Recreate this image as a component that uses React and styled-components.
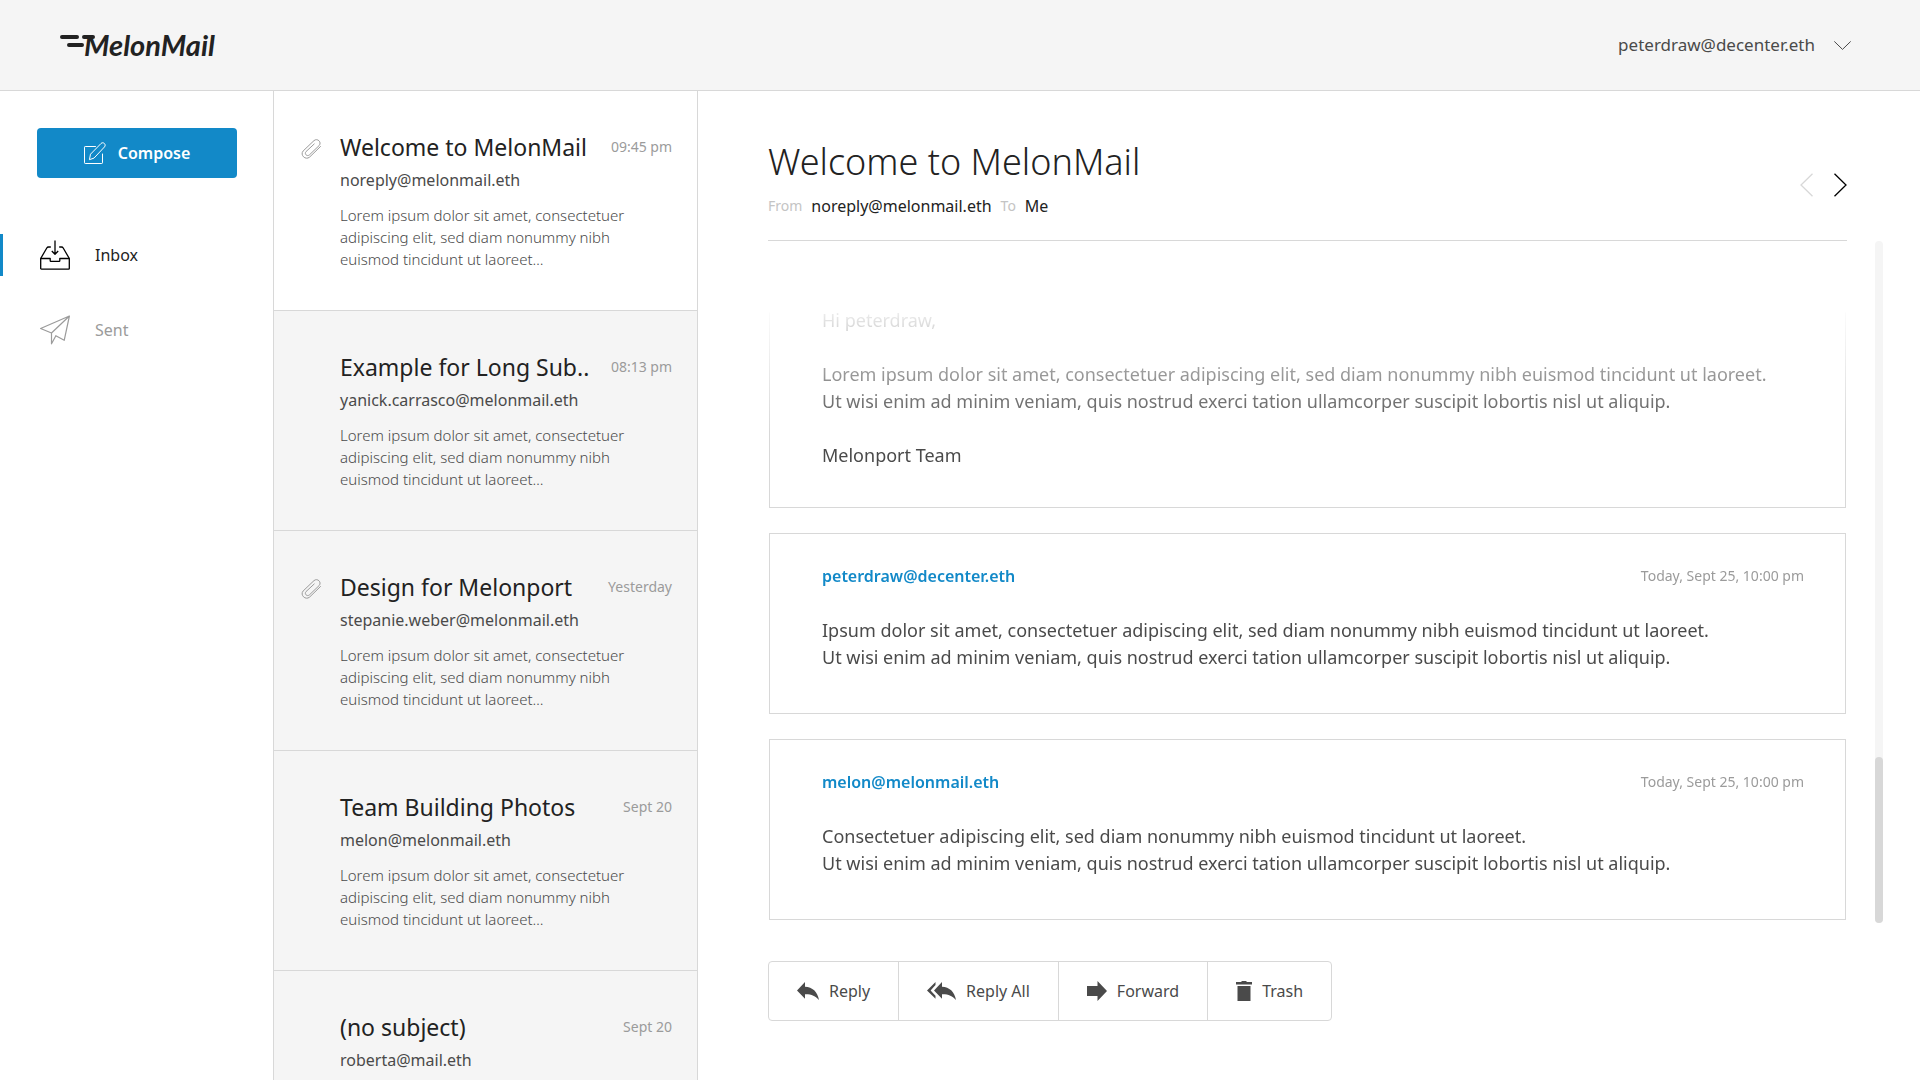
import React from 'react';
import styled, { createGlobalStyle } from 'styled-components';

const GlobalStyle = createGlobalStyle`
  *, *::before, *::after { box-sizing: border-box; }
  html, body, #root { height: 100%; margin: 0; }
  body {
    font-family: 'Noto Sans', 'Open Sans', sans-serif;
    font-size: 16px;
    line-height: 24px;
    color: #4a4a4a;
    background: #fff;
    overflow: hidden;
  }
  button { font: inherit; color: inherit; cursor: pointer; }
  a { color: inherit; text-decoration: none; }
  h1, h2, p, ul { margin: 0; padding: 0; font-weight: 400; }
  svg { display: block; flex: none; }
`;

const Page = styled.div`
  display: flex;
  flex-direction: column;
  height: 100vh;
`;

const TopBar = styled.header`
  display: flex;
  flex: none;
  align-items: center;
  justify-content: space-between;
  height: 91px;
  padding: 0 69px 0 60px;
  background: #f5f5f5;
  border-bottom: 1px solid #d8d8d8;
`;

const Logo = styled.a`
  display: flex;
  align-items: center;
  color: #222;
`;

const LogoText = styled.span`
  margin-left: -12px;
  font-family: Lato, 'Noto Sans', sans-serif;
  font-size: 29px;
  font-style: italic;
  font-weight: 700;
  line-height: 32px;
`;

const Account = styled.button`
  display: flex;
  align-items: center;
  gap: 19px;
  padding: 0;
  border: 0;
  background: none;
  font-size: 17px;
`;

const Body = styled.div`
  display: flex;
  flex: 1;
  min-height: 0;
`;

const Sidebar = styled.aside`
  flex: none;
  width: 273px;
  padding-top: 37px;
`;

const Compose = styled.button`
  display: flex;
  align-items: center;
  justify-content: center;
  gap: 12px;
  width: 200px;
  height: 50px;
  margin: 0 0 56px 37px;
  border: 0;
  border-radius: 4px;
  background: #1289c8;
  color: #fff;
  font-size: 16px;
  font-weight: 600;
`;

const Folders = styled.nav`
  display: flex;
  flex-direction: column;
  gap: 33px;
`;

const Folder = styled.a`
  display: flex;
  align-items: center;
  gap: 25px;
  height: 42px;
  padding-left: 37px;
  border-left: 3px solid ${(p) => (p.$active ? '#1289c8' : 'transparent')};
  color: ${(p) => (p.$active ? '#222' : '#9b9b9b')};
`;

const MailList = styled.ul`
  flex: none;
  width: 425px;
  overflow: hidden;
  list-style: none;
  background: #f5f5f5;
  border-left: 1px solid #d8d8d8;
  border-right: 1px solid #d8d8d8;
`;

const MailItem = styled.li`
  display: grid;
  grid-template-columns: 20px minmax(0, 1fr);
  column-gap: 19px;
  padding: 40px 25px 40px 27px;
  background: ${(p) => (p.$selected ? '#fff' : '#f5f5f5')};
  border-bottom: 1px solid #d8d8d8;
`;

const ClipSlot = styled.span`
  padding-top: 8px;
`;

const MailHead = styled.div`
  display: flex;
  align-items: center;
  justify-content: space-between;
  margin-bottom: 5px;
`;

const Subject = styled.h2`
  color: #222;
  font-size: 23px;
  line-height: 32px;
  white-space: nowrap;
`;

const Muted = styled.time`
  color: #9b9b9b;
  font-size: 14px;
  white-space: nowrap;
`;

const Snippet = styled.p`
  max-width: 310px;
  margin-top: 12px;
  font-size: 15px;
  font-weight: 300;
  line-height: 22px;
`;

const Reader = styled.main`
  display: flex;
  flex: 1;
  flex-direction: column;
  min-width: 0;
  padding: 47px 37px 59px 70px;
`;

const ReaderHead = styled.div`
  display: flex;
  align-items: center;
  justify-content: space-between;
  margin-right: 36px;
  padding-bottom: 22px;
  border-bottom: 1px solid #d8d8d8;
`;

const Title = styled.h1`
  margin-bottom: 8px;
  color: #222;
  font-size: 36px;
  font-weight: 300;
  line-height: 48px;
`;

const Route = styled.p`
  display: flex;
  gap: 9px;
  color: #222;
`;

const RouteLabel = styled.span`
  color: #c4c4c4;
  font-size: 14px;
`;

const Pager = styled.div`
  display: flex;
  gap: 21px;
  padding-top: 14px;
`;

const PagerButton = styled.button`
  padding: 0;
  border: 0;
  background: none;
  color: ${(p) => (p.disabled ? '#d8d8d8' : '#000')};
`;

const ThreadRow = styled.div`
  display: flex;
  flex: 1;
  gap: 28px;
  min-height: 0;
`;

const Thread = styled.div`
  display: flex;
  flex: 1;
  flex-direction: column;
  justify-content: flex-end;
  gap: 25px;
  min-width: 0;
  padding: 0 1px 3px;
  overflow: hidden;
  mask-image: linear-gradient(
    to bottom,
    transparent 71px,
    rgba(0, 0, 0, 0.1) 72px,
    #000 192px
  );
`;

const Card = styled.article`
  flex: none;
  padding: ${(p) => (p.$continued ? '60px 41px 38px 52px' : '30px 41px 42px 52px')};
  border: 1px solid #d8d8d8;
`;

const CardHead = styled.div`
  display: flex;
  align-items: center;
  justify-content: space-between;
  margin-bottom: 29px;
`;

const Sender = styled.a`
  color: #1289c8;
  font-weight: 600;
`;

const Copy = styled.p`
  font-size: 18px;
  line-height: 27px;

  & + & {
    margin-top: 27px;
  }
`;

const Track = styled.div`
  display: flex;
  flex: none;
  flex-direction: column;
  justify-content: flex-end;
  width: 8px;
  border-radius: 4px;
  background: #f5f5f5;
`;

const Thumb = styled.div`
  height: 166px;
  border-radius: 4px;
  background: #d8d8d8;
`;

const Actions = styled.div`
  display: flex;
  align-self: flex-start;
  height: 60px;
  margin-top: 38px;
  border: 1px solid #d8d8d8;
  border-radius: 4px;
`;

const Action = styled.button`
  display: flex;
  align-items: center;
  gap: 10px;
  padding: 0 28px;
  border: 0;
  background: none;

  & + & {
    border-left: 1px solid #d8d8d8;
  }
`;

const LogoMark = () => (
  <svg width="36" height="22" viewBox="0 0 36 22" fill="none" stroke="currentColor" strokeWidth="4" strokeLinecap="round">
    <path d="M2 3h15M24 3h9M9 11h13" />
  </svg>
);

const ChevronDown = () => (
  <svg width="17" height="9" viewBox="0 0 17 9" fill="none" stroke="currentColor">
    <path d="M.3.4l8.2 8 8.2-8" />
  </svg>
);

const ComposeIcon = () => (
  <svg width="22" height="22" viewBox="0 0 22 22" fill="none" stroke="currentColor" strokeLinejoin="round" strokeLinecap="round">
    <path d="M11.5 4.5H1.2a.7.7 0 0 0-.7.7v15.6c0 .4.3.7.7.7h16.6c.4 0 .7-.3.7-.7V12" />
    <path d="M5.5 17.3l1-5.1L17 1.5c2.200-2.200 5.600 1 3.500 3.400L10.300 15.800z" />
  </svg>
);

const InboxIcon = () => (
  <svg width="30" height="30" viewBox="0 0 30 30" fill="none" stroke="#000" strokeWidth="1.3" strokeLinejoin="round">
    <path d="M.7 18.5h9.500v2.200c0 .4.300.7.700.7h8.200c.4 0 .7-.3.700-.7v-2.200h9.500v9.900c0 .4-.3.7-.7.7H1.400c-.4 0-.7-.3-.7-.7z" />
    <path d="M.7 18.5L6.800 8c.4-.7.9-1 1.700-1h2.300M29.300 18.500L23.200 8c-.4-.7-.9-1-1.700-1h-2.300M15 .5v13.600M11.800 11l3.200 3.200 3.200-3.200" />
  </svg>
);

const SentIcon = () => (
  <svg width="30" height="30" viewBox="0 0 30 30" fill="none" stroke="currentColor" strokeWidth="1.200" strokeLinejoin="round">
    <path d="M11.5 18L.6 13.500 29.400 1l-5.200 24.300-8.800-4.800M29.400 1L11.500 18v10.800l4.400-8" />
  </svg>
);

const ClipIcon = () => (
  <svg width="20" height="20" viewBox="0 0 20 20" fill="none" stroke="#9b9b9b" strokeLinecap="round">
    <path d="M19.500 7.500L8.600 18.100C4.500 21.600-1.200 16 2.100 12L13 1.600c3.400-2.900 8 1.600 5.200 4.900L8.400 15.900c-2.400 2-5.400-1-3.400-3.300L13.200 5" />
  </svg>
);

const Prev = () => (
  <svg width="13" height="24" viewBox="0 0 13 24" fill="none" stroke="currentColor" strokeWidth="1.300">
    <path d="M12.500.7L1 12l11.500 11.300" />
  </svg>
);

const Next = () => (
  <svg width="13" height="24" viewBox="0 0 13 24" fill="none" stroke="currentColor" strokeWidth="1.300">
    <path d="M.5.7L12 12 .5 23.300" />
  </svg>
);

const ReplyIcon = () => (
  <svg width="22" height="18" viewBox="0 0 22 18" fill="currentColor">
    <path d="M8 0v4.700c7.500.4 12.500 4.800 14 13.300-3.500-4.300-8-6-14-5.800v4.600L0 8.400z" />
  </svg>
);

const ReplyAllIcon = () => (
  <svg width="29" height="18" viewBox="0 0 29 18" fill="currentColor">
    <path d="M15 0v4.700c7.500.4 12.500 4.800 14 13.300-3.500-4.300-8-6-14-5.800v4.600L7 8.400z" />
    <path d="M8.500 0v3L3.600 8.400l4.900 5.400v3L0 8.400z" />
  </svg>
);

const ForwardIcon = () => (
  <svg width="20" height="20" viewBox="0 0 20 20" fill="currentColor">
    <path d="M0 5h10.500V0L20 10l-9.500 10v-5H0z" />
  </svg>
);

const TrashIcon = () => (
  <svg width="16" height="20" viewBox="0 0 16 20" fill="currentColor">
    <path d="M0 1h5l1-1h4l1 1h5v2.500H0zM1.500 5h13v15h-13z" />
  </svg>
);

const SNIPPET = 'Lorem ipsum dolor sit amet, consectetuer adipiscing elit, sed diam nonummy nibh euismod tincidunt ut laoreet…';

const MAILS = [
  { subject: 'Welcome to MelonMail', from: 'noreply@melonmail.eth', time: '09:45 pm', clip: true, snippet: SNIPPET },
  { subject: 'Example for Long Sub..', from: 'yanick.carrasco@melonmail.eth', time: '08:13 pm', snippet: SNIPPET },
  { subject: 'Design for Melonport', from: 'stepanie.weber@melonmail.eth', time: 'Yesterday', clip: true, snippet: SNIPPET },
  { subject: 'Team Building Photos', from: 'melon@melonmail.eth', time: 'Sept 20', snippet: SNIPPET },
  { subject: '(no subject)', from: 'roberta@mail.eth', time: 'Sept 20' },
];

const WISI = 'Ut wisi enim ad minim veniam, quis nostrud exerci tation ullamcorper suscipit lobortis nisl ut aliquip.';

const REPLIES = [
  {
    from: 'peterdraw@decenter.eth',
    text: 'Ipsum dolor sit amet, consectetuer adipiscing elit, sed diam nonummy nibh euismod tincidunt ut laoreet.',
  },
  {
    from: 'melon@melonmail.eth',
    text: 'Consectetuer adipiscing elit, sed diam nonummy nibh euismod tincidunt ut laoreet.',
  },
];

const ACTIONS = [
  ['Reply', ReplyIcon],
  ['Reply All', ReplyAllIcon],
  ['Forward', ForwardIcon],
  ['Trash', TrashIcon],
];

export default function App() {
  return (
    <Page>
      <GlobalStyle />
      <TopBar>
        <Logo href="#">
          <LogoMark />
          <LogoText>MelonMail</LogoText>
        </Logo>
        <Account type="button">
          peterdraw@decenter.eth
          <ChevronDown />
        </Account>
      </TopBar>
      <Body>
        <Sidebar>
          <Compose type="button">
            <ComposeIcon />
            Compose
          </Compose>
          <Folders>
            <Folder href="#inbox" $active>
              <InboxIcon />
              Inbox
            </Folder>
            <Folder href="#sent">
              <SentIcon />
              Sent
            </Folder>
          </Folders>
        </Sidebar>
        <MailList>
          {MAILS.map((mail, i) => (
            <MailItem key={mail.from} $selected={i === 0}>
              <ClipSlot>{mail.clip && <ClipIcon />}</ClipSlot>
              <div>
                <MailHead>
                  <Subject>{mail.subject}</Subject>
                  <Muted>{mail.time}</Muted>
                </MailHead>
                <p>{mail.from}</p>
                {mail.snippet && <Snippet>{mail.snippet}</Snippet>}
              </div>
            </MailItem>
          ))}
        </MailList>
        <Reader>
          <ReaderHead>
            <div>
              <Title>Welcome to MelonMail</Title>
              <Route>
                <RouteLabel>From</RouteLabel>
                <span>noreply@melonmail.eth</span>
                <RouteLabel>To</RouteLabel>
                <span>Me</span>
              </Route>
            </div>
            <Pager>
              <PagerButton type="button" aria-label="Previous" disabled>
                <Prev />
              </PagerButton>
              <PagerButton type="button" aria-label="Next">
                <Next />
              </PagerButton>
            </Pager>
          </ReaderHead>
          <ThreadRow>
            <Thread>
              <Card $continued>
                <Copy>Hi peterdraw,</Copy>
                <Copy>
                  Lorem ipsum dolor sit amet, consectetuer adipiscing elit, sed diam nonummy nibh euismod tincidunt ut laoreet.
                  <br />
                  {WISI}
                </Copy>
                <Copy>Melonport Team</Copy>
              </Card>
              {REPLIES.map((reply) => (
                <Card key={reply.from}>
                  <CardHead>
                    <Sender href="#">{reply.from}</Sender>
                    <Muted>Today, Sept 25, 10:00 pm</Muted>
                  </CardHead>
                  <Copy>
                    {reply.text}
                    <br />
                    {WISI}
                  </Copy>
                </Card>
              ))}
            </Thread>
            <Track>
              <Thumb />
            </Track>
          </ThreadRow>
          <Actions>
            {ACTIONS.map(([label, Icon]) => (
              <Action key={label} type="button">
                <Icon />
                {label}
              </Action>
            ))}
          </Actions>
        </Reader>
      </Body>
    </Page>
  );
}
